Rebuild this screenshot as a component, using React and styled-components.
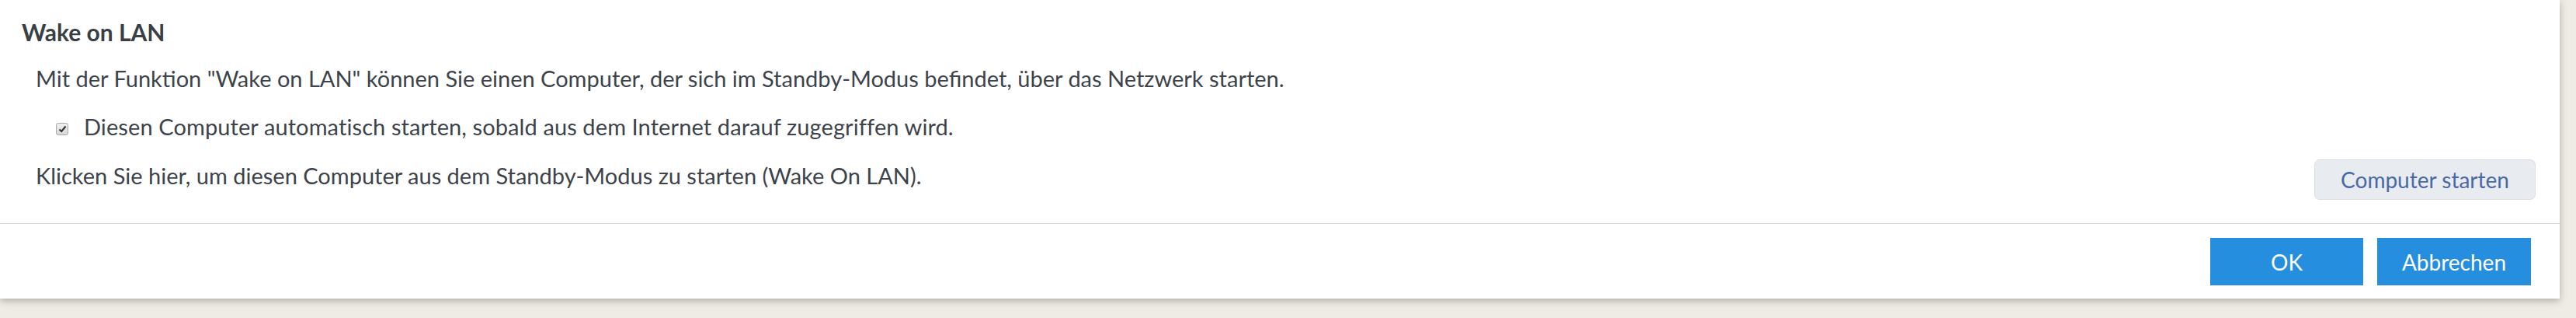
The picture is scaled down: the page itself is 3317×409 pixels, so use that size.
import React from 'react'
import styled, { createGlobalStyle } from 'styled-components';

const GlobalStyle = createGlobalStyle`
   html, body {
      margin:0;
      padding:0;
      background:#efece6;
   }
   body {
      font-family:Lato, "Open Sans", sans-serif;
      color:#3d434b;
   }
`;

const StyledPage = styled.div`
   width:100%;
   height:409px;
   overflow:hidden;
   background:#efece6;
`;

const StyledDialog = styled.section`
   display:flex;
   flex-direction:column;
   width:3296px;
   height:384px;
   background:#fff;
   box-shadow:0 3px 9px rgba(60,55,45,0.35);
`;

const StyledBody = styled.div`
   flex:1;
   display:flex;
   flex-direction:column;
   padding:21px 31px 0 28px;
`;

const StyledTitle = styled.h2`
   margin:0;
   font-size:30px;
   font-weight:700;
   line-height:40px;
   color:#3a3f46;
`;

const StyledText = styled.p`
   margin:20px 0 0;
   padding-left:18px;
   font-size:29px;
   line-height:40px;
`;

const StyledCheckRow = styled.label`
   display:flex;
   align-items:center;
   gap:20px;
   margin-top:22px;
   padding-left:44px;
   font-size:29px;
   line-height:40px;
   letter-spacing:0.1px;
`;

const StyledBox = styled.span`
   display:flex;
   align-items:center;
   justify-content:center;
   box-sizing:border-box;
   width:16px;
   height:16px;
   margin-top:6px;
   border:1px solid #a9a9a9;
   border-radius:3px;
   background:linear-gradient(#f0f0f0, #d9d9d9);
`;

const StyledActionRow = styled.div`
   display:flex;
   align-items:flex-start;
   justify-content:space-between;
   margin-top:19px;
   padding-left:18px;
   font-size:29px;
   line-height:40px;
`;

const StyledActionText = styled.span`
   padding-top:4px;
`;

const StyledSoftButton = styled.button`
   margin-top:3px;
   width:285px;
   height:52px;
   border:1px solid #d9dee3;
   border-radius:7px;
   background:#e8ecf0;
   color:#4a69a4;
   font-family:Lato, "Open Sans", sans-serif;
   font-size:28px;
`;

const StyledFooter = styled.footer`
   display:flex;
   justify-content:flex-end;
   gap:18px;
   padding:18px 37px 17px 0;
   border-top:1px solid #d6d6d6;
`;

const StyledPrimaryButton = styled.button`
   width:${props => props.$wide ? '198px' : '197px'};
   height:61px;
   border:none;
   background:#268edf;
   color:#fff;
   font-family:Lato, "Open Sans", sans-serif;
   font-size:28px;
`;

const App = () => {
   return (
      <StyledPage>
         <GlobalStyle />
         <StyledDialog>
            <StyledBody>
               <StyledTitle>Wake on LAN</StyledTitle>
               <StyledText>Mit der Funktion "Wake on LAN" können Sie einen Computer, der sich im Standby-Modus befindet, über das Netzwerk starten.</StyledText>
               <StyledCheckRow>
                  <StyledBox>
                     <svg width="11" height="10" viewBox="0 0 11 10">
                        <path d="M1.5 5.5 L4.2 8 L9.5 1.5" fill="none" stroke="#333" strokeWidth="2.2" />
                     </svg>
                  </StyledBox>
                  Diesen Computer automatisch starten, sobald aus dem Internet darauf zugegriffen wird.
               </StyledCheckRow>
               <StyledActionRow>
                  <StyledActionText>Klicken Sie hier, um diesen Computer aus dem Standby-Modus zu starten (Wake On LAN).</StyledActionText>
                  <StyledSoftButton>Computer starten</StyledSoftButton>
               </StyledActionRow>
            </StyledBody>
            <StyledFooter>
               <StyledPrimaryButton>OK</StyledPrimaryButton>
               <StyledPrimaryButton $wide>Abbrechen</StyledPrimaryButton>
            </StyledFooter>
         </StyledDialog>
      </StyledPage>
   )
}

export default App
